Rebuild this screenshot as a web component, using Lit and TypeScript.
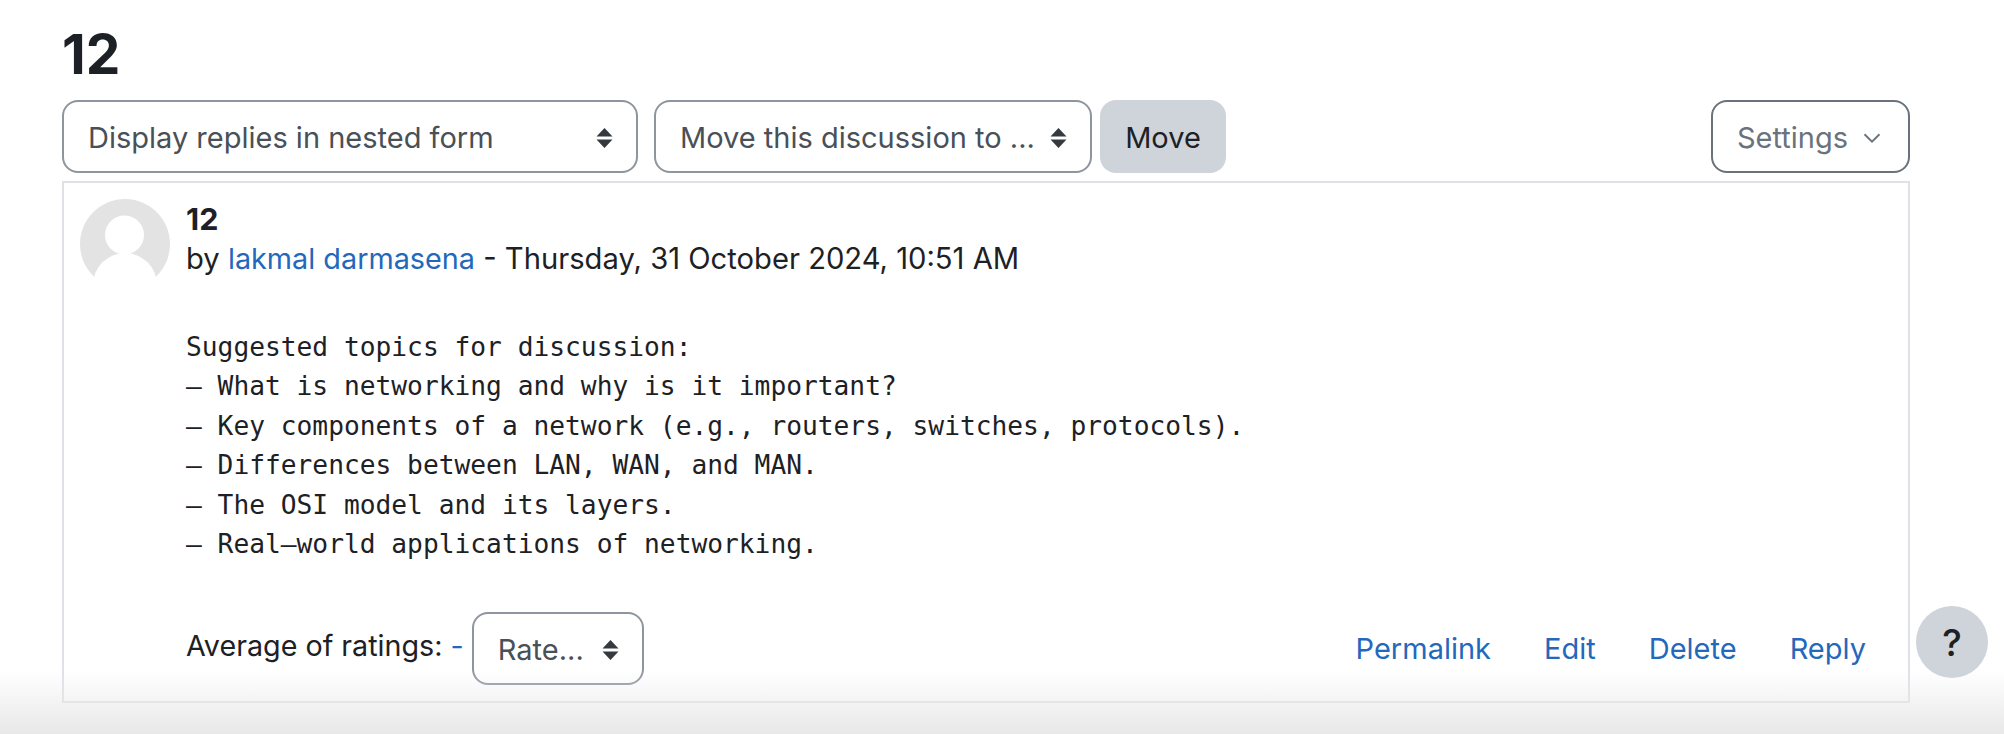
import { LitElement, html, css } from 'lit';
import { customElement } from 'lit/decorators.js';

const updown = html`<svg class="updown" viewBox="0 0 17 20" width="17" height="20"><path d="M8.5 0l8 8.5H.5z M8.5 20l-8-8.5h16z" fill="#343a40"/></svg>`;

@customElement('app-root')
export class AppRoot extends LitElement {
    static styles = css`
        :host {
            display: block;
            position: relative;
            height: 734px;
            overflow: hidden;
            background: #fff;
            color: #1d2125;
            font-family: Inter, "Liberation Sans", sans-serif;
            font-size: 29px;
        }

        .page {
            padding: 0 94px 0 62px;
        }

        h1 {
            margin: 0;
            height: 100px;
            font-size: 55px;
            font-weight: 700;
            line-height: 108px;
        }

        .toolbar {
            display: flex;
            gap: 8px;
            height: 73px;
        }

        .select {
            display: flex;
            align-items: center;
            justify-content: space-between;
            box-sizing: border-box;
            height: 73px;
            padding: 2px 23px 0 24px;
            border: 2px solid #8f959e;
            border-radius: 16px;
            color: #495057;
            background: #fff;
        }

        .replies { width: 576px; margin-right: 8px; }
        .move-to { width: 438px; }
        .rate { width: 172px; margin-left: 8px; }

        .btn {
            display: flex;
            align-items: center;
            justify-content: center;
            box-sizing: border-box;
            width: 126px;
            padding-top: 2px;
            border-radius: 16px;
            background: #ced4da;
        }

        .settings {
            display: flex;
            align-items: center;
            gap: 14px;
            box-sizing: border-box;
            margin-left: auto;
            width: 199px;
            padding: 2px 24px 0;
            border: 2px solid #6a737b;
            border-radius: 16px;
            color: #6a737b;
        }

        .post {
            display: flex;
            box-sizing: border-box;
            height: 522px;
            margin-top: 8px;
            padding: 16px 42px 16px 16px;
            border: 2px solid #dee2e6;
        }

        .avatar {
            flex: none;
            width: 90px;
            height: 90px;
            margin-right: 16px;
        }

        .body {
            flex: 1;
            display: flex;
            flex-direction: column;
        }

        .subject {
            font-size: 30.5px;
            font-weight: 700;
            line-height: 40px;
        }

        .byline {
            font-size: 29.2px;
            line-height: 39px;
        }

        .byline a {
            font-size: 28.8px;
        }

        a {
            color: #2468bc;
            text-decoration: none;
        }

        pre {
            margin: 50px 0 0;
            font-family: "DejaVu Sans Mono", monospace;
            font-size: 26.24px;
            line-height: 39.4px;
        }

        .foot {
            display: flex;
            align-items: center;
            margin-top: auto;
        }

        .rating {
            margin-bottom: 6px;
            font-size: 28.7px;
        }

        .links {
            display: flex;
            gap: 53px;
            margin-left: auto;
        }

        .help {
            position: absolute;
            left: 1916px;
            top: 606px;
            display: flex;
            align-items: center;
            justify-content: center;
            width: 72px;
            height: 72px;
            border-radius: 50%;
            background: #ced4da;
            font-size: 37px;
            font-weight: 500;
        }

        .fade {
            position: absolute;
            left: 0;
            right: 0;
            bottom: 0;
            height: 64px;
            background: linear-gradient(rgba(232, 232, 232, 0), #e8e8e8);
            pointer-events: none;
        }
    `;

    render() {
        return html`
          <div class="page">
            <h1>12</h1>
            <div class="toolbar">
              <div class="select replies"><span>Display replies in nested form</span>${updown}</div>
              <div class="select move-to"><span>Move this discussion to ...</span>${updown}</div>
              <div class="btn">Move</div>
              <div class="settings">
                <span>Settings</span>
                <svg viewBox="0 0 16 16" width="20" height="20" fill="none" stroke="#6a737b" stroke-width="1.5"><path d="M2 5l6 6 6-6"/></svg>
              </div>
            </div>
            <div class="post">
              <svg class="avatar" viewBox="0 0 90 90">
                <circle cx="45" cy="45" r="45" fill="#e3e3e3"/>
                <g fill="#fff">
                  <circle cx="44.5" cy="36" r="19.5"/>
                  <ellipse cx="45" cy="86" rx="32" ry="32"/>
                </g>
              </svg>
              <div class="body">
                <div class="subject">12</div>
                <div class="byline">by <a href="#">lakmal darmasena</a> - Thursday, 31 October 2024, 10:51 AM</div>
<pre>Suggested topics for discussion:
– What is networking and why is it important?
– Key components of a network (e.g., routers, switches, protocols).
– Differences between LAN, WAN, and MAN.
– The OSI model and its layers.
– Real–world applications of networking.</pre>
                <div class="foot">
                  <span class="rating">Average of ratings: <a href="#">-</a></span>
                  <div class="select rate"><span>Rate...</span>${updown}</div>
                  <div class="links">
                    <a href="#">Permalink</a>
                    <a href="#">Edit</a>
                    <a href="#">Delete</a>
                    <a href="#">Reply</a>
                  </div>
                </div>
              </div>
            </div>
          </div>
          <div class="fade"></div>
          <div class="help">?</div>
        `;
    }
}
